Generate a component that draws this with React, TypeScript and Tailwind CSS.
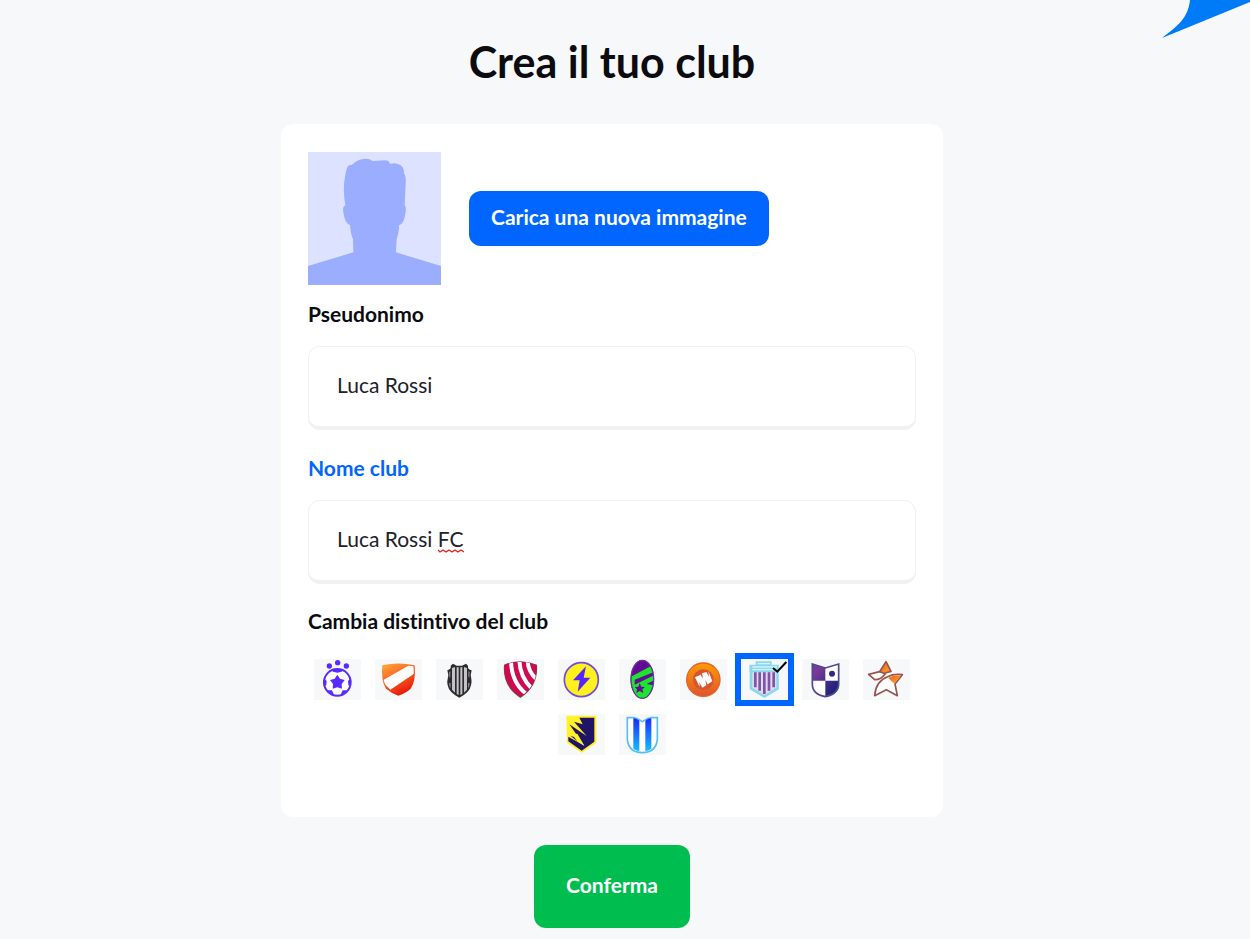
import React, { useState } from 'react';

const Avatar: React.FC = () => (
  <svg viewBox="0 0 399 399" className="w-[133px] h-[133px] shrink-0" role="img" aria-label="Avatar">
    <rect width="399" height="399" fill="#dce2ff" />
    <path
      fill="#9badff"
      d="M0 342 L136 301 L135 262 Q128 246 126 219 Q110 214 106 180 Q103 163 112 160 Q103 110 112 68 Q116 44 123 40 L131 39 Q152 19 174 20 Q186 20 194 27 L232 25 Q242 25 246 35 Q268 30 280 41 Q290 50 287 63 Q295 72 293 94 L290 160 Q295 163 293 180 Q289 216 273 220 Q274 236 266 262 L264 301 L399 342 V399 H0 Z"
    />
  </svg>
);

const BallBadge = () => (
  <>
    <g fill="#5a2bff">
      <circle cx="46" cy="21" r="8" />
      <circle cx="71" cy="11" r="8" />
      <circle cx="97" cy="21" r="8" />
    </g>
    <circle cx="70" cy="70" r="40" fill="#fff" stroke="#5a2bff" strokeWidth="6" />
    <g fill="#5a2bff">
      <path d="M70 47 L78 59 L92 63 L83 75 L84 89 L70 85 L56 89 L57 75 L48 63 L62 59 Z" />
      <path d="M52 31 H88 L83 38 L70 41 L57 38 Z" />
      <path d="M30 58 L38 66 L37 79 L29 82 Z" />
      <path d="M110 58 L102 66 L103 79 L111 82 Z" />
      <path d="M40 94 L54 94 L60 107 L52 107 Z" />
      <path d="M100 94 L86 94 L80 107 L88 107 Z" />
    </g>
  </>
);

const OrangeShieldBadge = () => (
  <>
    <defs>
      <linearGradient id="orange-shield" x1="0" y1="0" x2="0.5" y2="1">
        <stop offset="0.1" stopColor="#ff9f35" />
        <stop offset="0.5" stopColor="#fb6325" />
        <stop offset="1" stopColor="#e81b0c" />
      </linearGradient>
      <clipPath id="orange-shield-clip">
        <path d="M25 22 Q69 10 115 22 Q120 64 104 87 Q92 101 70 107 Q47 101 36 87 Q20 64 25 22 Z" />
      </clipPath>
    </defs>
    <path d="M22 19 Q69 8 119 19 Q124 65 107 89 Q94 101 70 110 Q47 101 33 89 Q17 65 22 19 Z" fill="url(#orange-shield)" />
    <path clipPath="url(#orange-shield-clip)" d="M20 66 L100 20 L120 20 L119 43 L46 92 Z" fill="#fff" />
  </>
);

const StripedShieldBadge = () => (
  <>
    <path d="M51 14 L62 20 H78 L90 14 L96 20 Q94 31 107 34 Q102 48 106 60 Q108 70 105 79 Q101 101 70 116 Q39 101 35 79 Q32 70 35 60 Q39 47 34 34 Q47 29 44 20 Z" fill="#2b2b2d" />
    <path d="M48 27 L57 24 V101 L48 92 Z M62 25 H68 V108 L62 105 Z M73 25 H79 V105 L73 108 Z M84 24 L93 27 V92 L84 101 Z" fill="#c5c2c7" />
    <path d="M39 39 L43 37 V53 L40 57 Z M101 39 L97 37 V53 L100 57 Z M39 72 H44 V88 L40 81 Z M101 72 H96 V88 L100 81 Z" fill="#88868b" />
  </>
);

const RedShieldBadge = () => (
  <>
    <defs>
      <clipPath id="red-shield-clip">
        <path d="M23 18 Q70 -1 118 18 Q123 78 70 113 Q17 78 23 18 Z" />
      </clipPath>
    </defs>
    <path d="M21 17 Q70 -4 120 17 Q125 82 70 117 Q15 82 21 17 Z" fill="#7d4438" />
    <g clipPath="url(#red-shield-clip)">
      <rect width="141" height="123" fill="#ce0b50" />
      <path d="M42 5 Q43 70 88 105 M67 2 Q68 53 104 88 M92 3 Q92 38 121 63" stroke="#fff" strokeWidth="12" fill="none" />
    </g>
  </>
);

const BoltBadge = () => (
  <>
    <circle cx="70" cy="62" r="51" fill="#fff01e" stroke="#714bdf" strokeWidth="5" />
    <path d="M84 22 L45 64 H65 L59 98 L97 56 H77 Z" fill="#5226ff" />
  </>
);

const GreenOvalBadge = () => (
  <>
    <defs>
      <clipPath id="oval-clip">
        <ellipse cx="70" cy="61" rx="35" ry="58" />
      </clipPath>
    </defs>
    <g clipPath="url(#oval-clip)">
      <rect width="141" height="123" fill="#640b96" />
      <path d="M32 55 L103 17 V40 L47 62 V77 L105 49 V64 L83 75 L103 79 V123 H34 Z" fill="#1ce52d" />
      <path d="M62 72 L67 83 L78 84 L70 91 L73 102 L62 96 L52 102 L54 91 L47 84 L58 83 Z" fill="#640b96" />
    </g>
    <ellipse cx="70" cy="61" rx="34" ry="57" fill="none" stroke="#69349c" strokeWidth="4" />
  </>
);

const OrangeCoinBadge = () => (
  <>
    <defs>
      <linearGradient id="coin" x1="0" y1="0" x2="0" y2="1">
        <stop offset="0" stopColor="#ff9c00" />
        <stop offset="1" stopColor="#dd552d" />
      </linearGradient>
    </defs>
    <circle cx="70" cy="62" r="50" fill="url(#coin)" stroke="#e8612f" strokeWidth="4" />
    <circle cx="70" cy="62" r="31" fill="#d4552e" />
    <path d="M45 55 L62 47 L69 60 L66 43 L79 39 L87 53 L85 36 L97 67 L83 76 L76 63 L79 79 L67 86 L58 70 L59 84 Z" fill="#fff" />
  </>
);

const TowerBadge = () => (
  <>
    <path d="M44 7 H92 V17 H113 V38 L114 91 L70 117 L26 91 V38 H25 V17 H44 Z" fill="#8bd8ee" />
    <path d="M50 14 H87 M34 24 H108 M34 32 H106" stroke="#d2f2fa" strokeWidth="4" />
    <path d="M34 40 H106 V86 L70 109 L34 86 Z" fill="#dcdcf1" />
    <path d="M43 40 V85 M56 40 V95 M70 40 V105 M84 40 V95 M98 40 V85" stroke="#8252a5" strokeWidth="8" />
  </>
);

const QuarteredBadge = () => (
  <>
    <defs>
      <linearGradient id="quartered" x1="0" y1="0" x2="1" y2="1">
        <stop offset="0.2" stopColor="#793b99" />
        <stop offset="0.8" stopColor="#20217b" />
      </linearGradient>
    </defs>
    <path d="M31 15 L70 27 L110 15 V76 Q109 106 70 113 Q31 106 31 76 Z" fill="#fff" />
    <path d="M31 15 L70 27 V65 H31 Z M70 65 H110 V76 Q109 106 70 113 Z" fill="url(#quartered)" />
    <circle cx="90" cy="44" r="9" fill="#35287e" />
    <path d="M31 15 L70 27 L110 15 V76 Q109 106 70 113 Q31 106 31 76 Z" fill="none" stroke="#51478f" strokeWidth="5" />
  </>
);

const StarBadge = () => (
  <>
    <defs>
      <linearGradient id="star" x1="0" y1="0" x2="1" y2="1">
        <stop offset="0" stopColor="#f15a22" />
        <stop offset="1" stopColor="#ffae22" />
      </linearGradient>
    </defs>
    <g stroke="#96544d" strokeWidth="5" strokeLinejoin="round">
      <path d="M50 38 L69 8 L84 37 Q69 39 55 49 Z" fill="url(#star)" />
      <path d="M17 46 L50 38 L67 44 Q53 63 35 62 Z" fill="#fff" />
      <path d="M35 110 Q38 66 74 53 Q92 44 118 47 L96 75 L103 110 L70 92 Z" fill="#fff" />
    </g>
    <path d="M76 57 Q91 48 113 50 L94 74 Z" fill="url(#star)" />
  </>
);

const ClawBadge = () => (
  <>
    <path d="M25 5 H115 V86 L71 117 L27 86 Z" fill="#fff22a" />
    <path d="M64 11 H109 V83 L71 110 L31 82 V68 L79 95 L34 31 L86 66 L48 23 L74 31 Z" fill="#201467" />
    <path d="M30 62 L58 59 L79 95 Z" fill="#fff22a" />
    <path d="M37 65 L48 69 L58 82 Z" fill="#201467" />
  </>
);

const BlueStripesBadge = () => (
  <>
    <defs>
      <linearGradient id="blue-stripes" x1="0" y1="0" x2="0" y2="1">
        <stop offset="0" stopColor="#182bff" />
        <stop offset="1" stopColor="#12bfff" />
      </linearGradient>
    </defs>
    <path d="M25 11 H44 Q57 13 70 23 Q84 13 96 11 H115 V76 Q111 115 70 116 Q29 115 25 76 Z" fill="#fff" stroke="#55bff4" strokeWidth="5" />
    <path d="M43 13 Q52 13 61 20 V112 Q50 109 43 104 Z M79 20 Q87 13 97 13 V104 Q90 109 79 112 Z" fill="url(#blue-stripes)" />
  </>
);

const badges = [
  { name: 'Pallone', Art: BallBadge },
  { name: 'Scudo arancione', Art: OrangeShieldBadge },
  { name: 'Scudo a righe', Art: StripedShieldBadge },
  { name: 'Scudo rosso', Art: RedShieldBadge },
  { name: 'Fulmine', Art: BoltBadge },
  { name: 'Ovale verde', Art: GreenOvalBadge },
  { name: 'Moneta', Art: OrangeCoinBadge },
  { name: 'Torre', Art: TowerBadge },
  { name: 'Scudo inquartato', Art: QuarteredBadge },
  { name: 'Stella', Art: StarBadge },
  { name: 'Artiglio', Art: ClawBadge },
  { name: 'Scudo azzurro', Art: BlueStripesBadge },
];

const inputClass =
  'block w-full h-[84px] rounded-xl border border-[#f0f1f3] border-b-4 bg-white px-7 pb-1 text-[21px] text-[#212126] outline-none';

const App: React.FC = () => {
  const [nickname, setNickname] = useState('Luca Rossi');
  const [clubName, setClubName] = useState('Luca Rossi FC');
  const [badge, setBadge] = useState('Torre');

  return (
    <div className="relative min-h-screen overflow-hidden bg-[#f7f8fa] pr-[26px] pt-[34px] pb-[11px] font-['Lato','Open_Sans',sans-serif] text-[#0b0b10] [font-variant-ligatures:none]">
      <svg viewBox="0 0 90 40" className="absolute top-0 right-0 w-[90px] h-10" aria-hidden="true">
        <path d="M30 0 C28 19 17 26 2 38 L90 2 V0 Z" fill="#007bf8" />
      </svg>

      <form className="mx-auto flex max-w-[662px] flex-col items-center" onSubmit={(e) => e.preventDefault()}>
        <h1 className="text-[43px] leading-[56px] font-bold">Crea il tuo club</h1>

        <div className="mt-[34px] w-full rounded-xl bg-white px-[27px] pt-7 pb-[62px]">
          <div className="flex items-center gap-7">
            <Avatar />
            <button type="button" className="h-[55px] rounded-xl bg-[#0066ff] px-[22px] pb-1 text-[21px] font-bold text-white">
              Carica una nuova immagine
            </button>
          </div>

          <label htmlFor="nickname" className="mt-[15px] block text-[21px] leading-7 font-bold">
            Pseudonimo
          </label>
          <input
            id="nickname"
            className={`${inputClass} mt-[18px]`}
            value={nickname}
            onChange={(e) => setNickname(e.target.value)}
          />

          <label htmlFor="club-name" className="mt-6 block text-[21px] leading-7 font-bold text-[#0066ff]">
            Nome club
          </label>
          <div className="relative mt-[18px]">
            <input
              id="club-name"
              className={inputClass}
              value={clubName}
              spellCheck={false}
              onChange={(e) => setClubName(e.target.value)}
            />
            {clubName.endsWith(' FC') && (
              <svg viewBox="0 0 26 4" className="absolute left-[130px] top-[49px] w-[26px] h-1" aria-hidden="true">
                <path d="M0 1 L2 3 L5 1 L8 3 L11 1 L14 3 L17 1 L20 3 L23 1 L26 3" fill="none" stroke="#f01c1c" strokeWidth="1.3" />
              </svg>
            )}
          </div>

          <fieldset className="mt-[23px]">
            <legend className="text-[21px] leading-7 font-bold">Cambia distintivo del club</legend>
            <div className="mt-6 flex flex-wrap justify-center gap-[14px]">
              {badges.map(({ name, Art }) => (
                <label
                  key={name}
                  className={`relative block h-[41px] w-[47px] cursor-pointer bg-[#f7f8fa] ${
                    badge === name ? 'ring-6 ring-[#0066ff]' : ''
                  }`}
                >
                  <input
                    type="radio"
                    name="badge"
                    className="sr-only"
                    aria-label={name}
                    checked={badge === name}
                    onChange={() => setBadge(name)}
                  />
                  <svg viewBox="0 0 141 123" className="h-full w-full" aria-hidden="true">
                    <Art />
                    {badge === name && (
                      <path d="M96 27 L109 38 L136 9" fill="none" stroke="#000" strokeWidth="6" />
                    )}
                  </svg>
                </label>
              ))}
            </div>
          </fieldset>
        </div>

        <button type="submit" className="mt-7 h-[83px] rounded-xl bg-[#00bd50] px-8 pb-1 text-[21px] font-bold text-white">
          Conferma
        </button>
      </form>
    </div>
  );
};

export default App;
